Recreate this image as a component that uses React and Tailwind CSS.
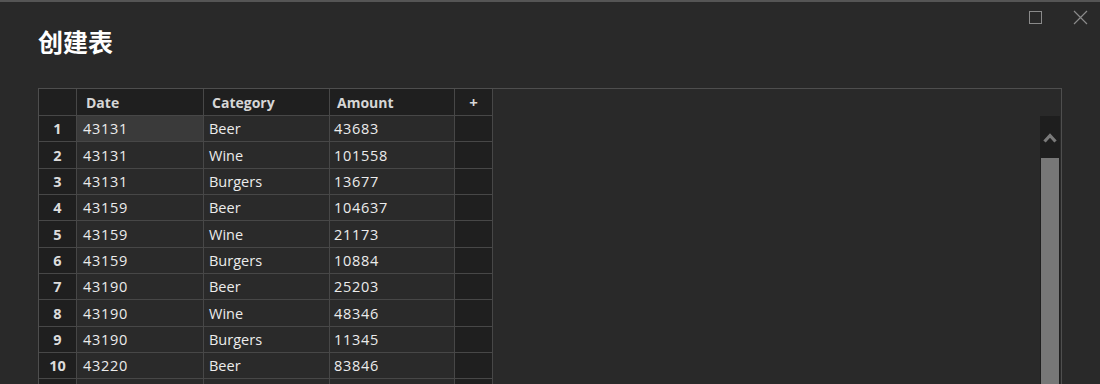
const rows = [
  ["43131", "Beer", "43683"],
  ["43131", "Wine", "101558"],
  ["43131", "Burgers", "13677"],
  ["43159", "Beer", "104637"],
  ["43159", "Wine", "21173"],
  ["43159", "Burgers", "10884"],
  ["43190", "Beer", "25203"],
  ["43190", "Wine", "48346"],
  ["43190", "Burgers", "11345"],
  ["43220", "Beer", "83846"],
];

const font = { fontFamily: '"Open Sans", "Noto Sans", sans-serif' };

export default function App() {
  return (
    <div
      className="h-[384px] overflow-hidden bg-[#292929] border-t-2 border-[#555555] text-[#ececec]"
      style={font}
    >
      {/* Title bar */}
      <div className="flex justify-between items-start">
        <h1
          className="ml-[38px] mt-[23px] text-[25px] leading-[32px] font-bold text-white"
          style={{ fontFamily: '"Noto Sans CJK SC", "Noto Sans", sans-serif' }}
        >
          创建表
        </h1>
        <div className="flex items-start gap-[31px] mt-[8px] mr-[12px]">
          <div className="mt-[1px] w-[13px] h-[13px] border border-[#8a8a8a]" />
          <svg width="15" height="15" viewBox="0 0 15 15">
            <path d="M1 1 L14 14 M14 1 L1 14" stroke="#8a8a8a" strokeWidth="1.2" fill="none" />
          </svg>
        </div>
      </div>

      {/* Table panel */}
      <div className="mx-[38px] mt-[31px] h-[300px] border border-[#4e4e4e] flex">
        <div className="flex flex-col text-[14px]">
          {/* Header */}
          <div className="shrink-0 flex h-[27px] bg-[#1f1f1f] border-b border-[#474747] font-bold text-[#d6d6d6]">
            <div className="w-[38px] border-r border-[#474747]" />
            <div className="w-[127px] border-r border-[#474747] pl-[9px] flex items-center">Date</div>
            <div className="w-[126px] border-r border-[#474747] pl-[8px] flex items-center">Category</div>
            <div className="w-[125px] border-r border-[#474747] pl-[7px] flex items-center">Amount</div>
            <div className="w-[38px] border-r border-[#474747] flex items-center justify-center text-[15px]">+</div>
          </div>
          {rows.map((r, i) => (
            <div key={i} className="shrink-0 flex h-[26.33px] border-b border-[#474747] text-[14.5px]">
              <div className="w-[38px] border-r border-[#474747] bg-[#1f1f1f] font-bold text-[#dcdcdc] flex items-center justify-center pt-[1px]">
                {i + 1}
              </div>
              <div
                className={`w-[127px] border-r border-[#474747] pl-[6px] pt-[1px] flex items-center tracking-[0.7px] ${
                  i === 0 ? "bg-[#3a3a3a]" : "bg-[#2a2a2a]"
                }`}
              >
                {r[0]}
              </div>
              <div className="w-[126px] border-r border-[#474747] pl-[5px] pt-[1px] flex items-center bg-[#2a2a2a]">{r[1]}</div>
              <div className="w-[125px] border-r border-[#474747] pl-[4px] pt-[1px] flex items-center bg-[#2a2a2a] tracking-[0.7px]">{r[2]}</div>
              <div className="w-[38px] border-r border-[#474747] bg-[#1f1f1f]" />
            </div>
          ))}
          {/* next row, below the fold */}
          <div className="shrink-0 flex h-[26.33px] border-b border-[#474747]">
            <div className="w-[38px] border-r border-[#474747] bg-[#1f1f1f]" />
            <div className="w-[127px] border-r border-[#474747] bg-[#2a2a2a]" />
            <div className="w-[126px] border-r border-[#474747] bg-[#2a2a2a]" />
            <div className="w-[125px] border-r border-[#474747] bg-[#2a2a2a]" />
            <div className="w-[38px] border-r border-[#474747] bg-[#1f1f1f]" />
          </div>
        </div>

        <div className="flex-1" />

        {/* Scrollbar */}
        <div className="w-[20px] mr-[1px] mt-[27px] bg-[#1e1e1e] flex flex-col">
          <div className="h-[42px] flex items-center justify-center">
            <svg width="14" height="11" viewBox="0 0 14 11">
              <path d="M1.5 9.5 L7 3.5 L12.5 9.5" stroke="#7a7a7a" strokeWidth="3.2" fill="none" />
            </svg>
          </div>
          <div className="flex-1 mx-[1px] bg-[#777777]" />
        </div>
      </div>
    </div>
  );
}
